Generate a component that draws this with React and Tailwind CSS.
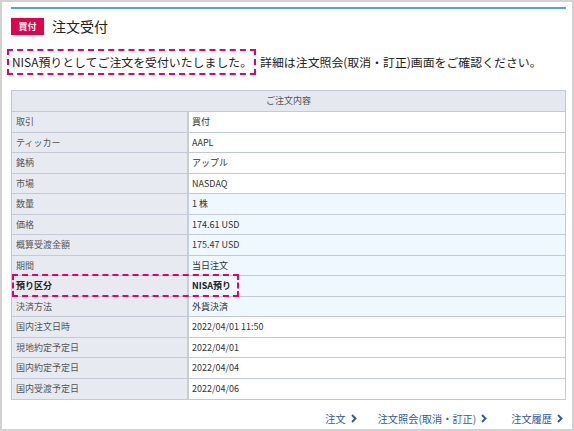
import React from 'react';

const rows = [
  { label: '取引', value: '買付' },
  { label: 'ティッカー', value: 'AAPL' },
  { label: '銘柄', value: 'アップル' },
  { label: '市場', value: 'NASDAQ' },
  { label: '数量', value: '1 株', tint: true },
  { label: '価格', value: '174.61 USD', tint: true },
  { label: '概算受渡金額', value: '175.47 USD', tint: true },
  { label: '期間', value: '当日注文', tint: true },
  { label: '預り区分', value: 'NISA預り', tint: true, mark: true },
  { label: '決済方法', value: '外貨決済', tint: true },
  { label: '国内注文日時', value: '2022/04/01 11:50' },
  { label: '現地約定予定日', value: '2022/04/01' },
  { label: '国内約定予定日', value: '2022/04/04' },
  { label: '国内受渡予定日', value: '2022/04/06' },
];

function Chevron() {
  return (
    <svg width="6" height="9" viewBox="0 0 6 9" className="ml-[5px] inline-block">
      <path d="M1 1l3.5 3.5L1 8" fill="none" stroke="currentColor" strokeWidth="1.9" />
    </svg>
  );
}

export default function App() {
  return (
    <div
      className="w-[574px] h-[431px] border-2 border-[#d2d2d2] bg-white flex flex-col pl-[9px] pr-[6px] overflow-hidden"
      style={{ fontFamily: '"Noto Sans CJK JP", "Noto Sans", sans-serif' }}
    >
      <div className="mt-[5px] h-[2px] bg-[#4ea6df]"></div>

      {/* heading */}
      <div className="flex items-center mt-[9px] h-[17px]">
        <span className="w-[33px] h-[17px] bg-[#e2004f] text-white text-[9px] font-bold flex items-center justify-center">買付</span>
        <span className="ml-[8px] text-[14px] text-[#222]">注文受付</span>
      </div>

      {/* message */}
      <div className="flex items-center mt-[14px] h-[26px] text-[11.9px] text-[#222] whitespace-nowrap">
        <span className="-ml-[4px] h-[26px] pl-[3px] pr-[2px] border-2 border-dashed border-[#e4006f] flex items-center">NISA預りとしてご注文を受付いたしました。</span>
        <span className="ml-[4px]">詳細は注文照会(取消・訂正)画面をご確認ください。</span>
      </div>

      {/* table */}
      <div className="mt-[15px] border border-[#c4c9d8] text-[9px] text-[#333]">
        <div className="h-[21px] bg-[#e6e8f0] border-b border-[#c4c9d8] flex items-center justify-center text-[#555]">ご注文内容</div>
        {rows.map((r) => (
          <div key={r.label} className="relative grid grid-cols-[177px_1fr] h-[20.5px] border-b border-[#c4c9d8] last:border-b-0">
            <div className={`bg-[#e8eaf1] border-r-2 border-[#c8cdda] flex items-center pl-[4px] ${r.mark ? 'font-bold text-[#222]' : 'text-[#555]'}`}>{r.label}</div>
            <div className={`${r.tint ? 'bg-[#eef8fe]' : 'bg-white'} flex items-center pl-[3px] ${r.mark ? 'font-bold text-[#222]' : ''}`}>{r.value}</div>
            {r.mark && (
              <div className="absolute left-0 top-[-2px] w-[227px] h-[23px] border-2 border-dashed border-[#e4006f]"></div>
            )}
          </div>
        ))}
      </div>

      {/* links */}
      <div className="flex justify-end items-center mt-[11px] pr-[3px] text-[10.2px] text-[#2c5ba8]">
        <span className="flex items-center">注文<Chevron /></span>
        <span className="flex items-center ml-[21px]">注文照会(取消・訂正)<Chevron /></span>
        <span className="flex items-center ml-[24px]">注文履歴<Chevron /></span>
      </div>
    </div>
  );
}
